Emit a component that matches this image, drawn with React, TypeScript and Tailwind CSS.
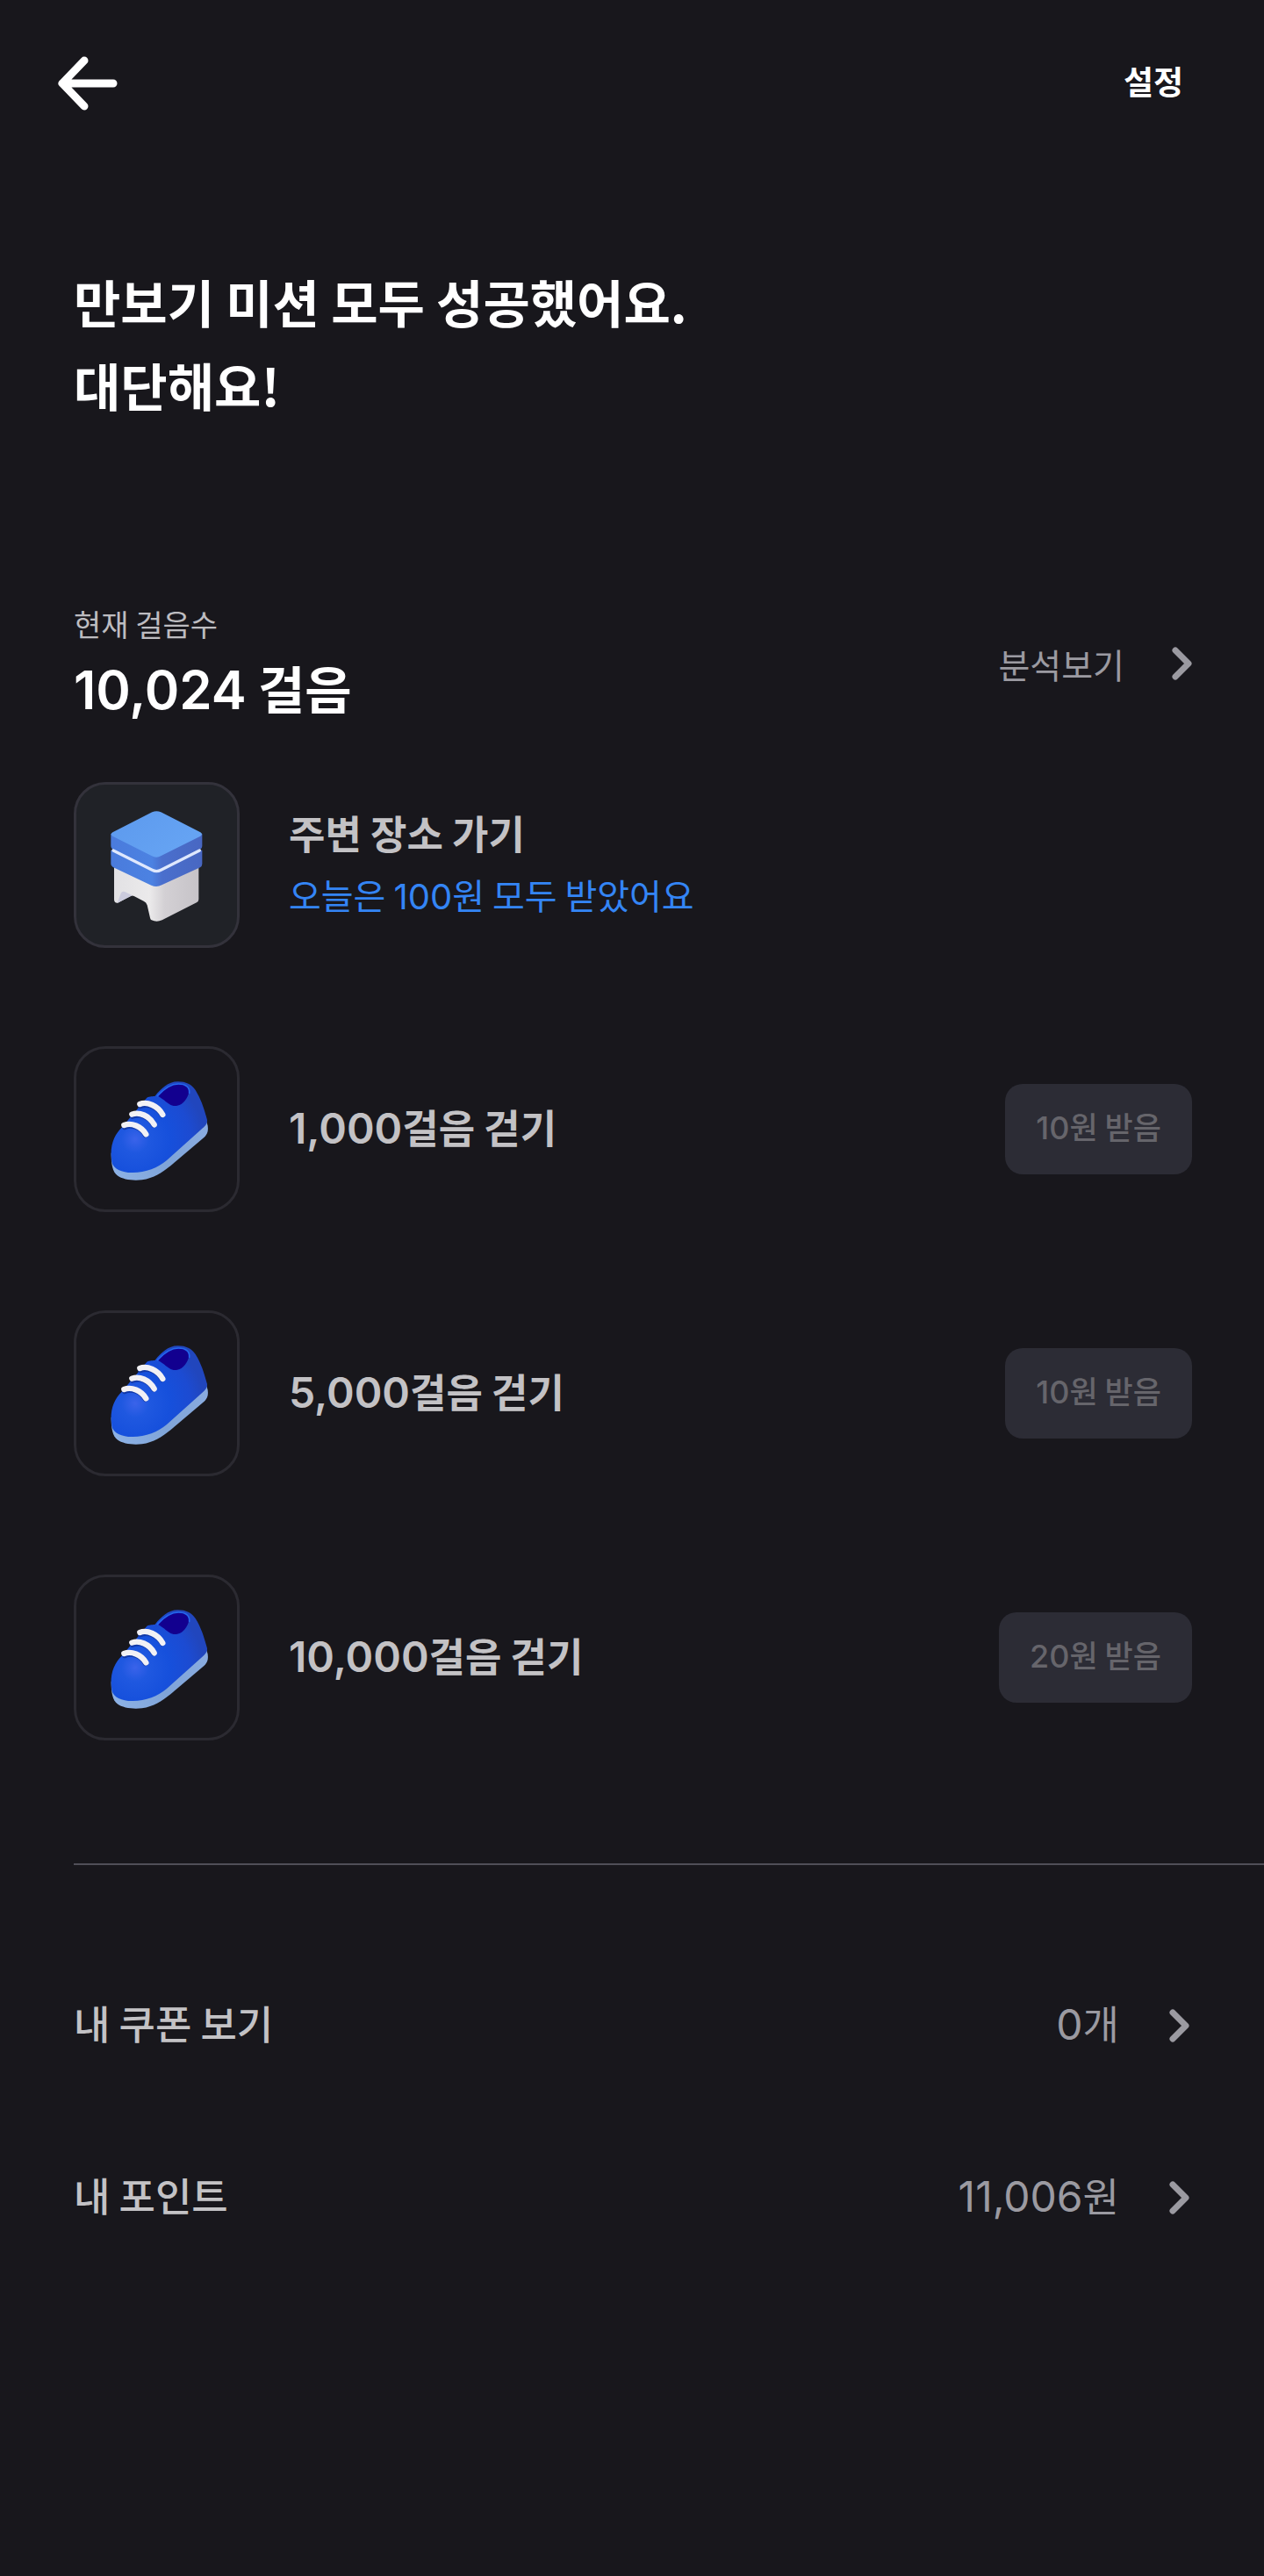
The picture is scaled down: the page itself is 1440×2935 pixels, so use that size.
import type { ReactNode } from "react";

// digits are set in Inter, slightly larger than the Hangul around them
function Num({ children }: { children: ReactNode }) {
  return <span className="font-['Inter',sans-serif] text-[48px] leading-none">{children}</span>;
}

function Chevron() {
  return (
    <svg
      width="26"
      height="40"
      viewBox="0 0 26 40"
      fill="none"
      stroke="#9b9aa1"
      strokeWidth="7"
      strokeLinecap="round"
      strokeLinejoin="round"
      aria-hidden="true"
    >
      <path d="M5 5 L20 20 L5 35" />
    </svg>
  );
}

function StoolIcon() {
  return (
    <svg width="130" height="130" viewBox="103 121 390 390" aria-hidden="true">
      <defs>
        <linearGradient id="stoolLeg" x1="150" y1="0" x2="440" y2="0" gradientUnits="userSpaceOnUse">
          <stop offset="0" stopColor="#e2e1e4" />
          <stop offset="0.42" stopColor="#ebeaeb" />
          <stop offset="0.6" stopColor="#d3d0d4" />
          <stop offset="1" stopColor="#c6c3c8" />
        </linearGradient>
        <linearGradient id="stoolSide" x1="140" y1="0" x2="452" y2="0" gradientUnits="userSpaceOnUse">
          <stop offset="0" stopColor="#4a7bdc" />
          <stop offset="0.45" stopColor="#4c82e2" />
          <stop offset="0.56" stopColor="#4a6fcd" />
          <stop offset="1" stopColor="#4867c2" />
        </linearGradient>
        <linearGradient id="stoolTop" x1="200" y1="140" x2="330" y2="290" gradientUnits="userSpaceOnUse">
          <stop offset="0" stopColor="#5e9bee" />
          <stop offset="1" stopColor="#65a3f3" />
        </linearGradient>
      </defs>
      <path
        d="M151 300 L440 300 V432 Q440 439 433 443 L315 503 Q296 511 279 503 Q275 501 274 495 L264 452 Q261 442 252 438 L219 421 Q213 418 207 421 L164 444 Q152 446 151 433 Z"
        fill="url(#stoolLeg)"
      />
      <path d="M162 444 L174 412 Q179 402 189 407 L213 419 Z" fill="#cbcbdd" />
      <path
        d="M140 264 L452 264 V311 Q452 319 445 323 L314 383 Q296 393 278 384 L147 322 Q140 318 140 311 Z"
        fill="url(#stoolSide)"
      />
      <path
        d="M140 208 L452 208 V250 Q452 258 445 262 L314 325 Q296 335 278 326 L147 262 Q140 258 140 250 Z"
        fill="url(#stoolSide)"
      />
      <path
        d="M148 265 L281 332 Q296 340 311 332 L443 265"
        fill="none"
        stroke="#dfe8fd"
        strokeWidth="10"
        strokeLinecap="round"
      />
      <path
        d="M146 203 L281 134 Q296 127 311 134 L446 203 Q456 209 446 216 L312 283 Q296 293 280 284 L146 216 Q136 209 146 203 Z"
        fill="url(#stoolTop)"
      />
    </svg>
  );
}

function ShoeIcon() {
  return (
    <svg width="130" height="130" viewBox="102 110 390 390" aria-hidden="true">
      <defs>
        <radialGradient id="shoeBody" cx="222" cy="338" r="235" gradientUnits="userSpaceOnUse">
          <stop offset="0" stopColor="#3a63ea" />
          <stop offset="0.2" stopColor="#1f58e0" />
          <stop offset="0.5" stopColor="#1650dc" />
          <stop offset="0.8" stopColor="#1c4bd2" />
          <stop offset="1" stopColor="#2146bd" />
        </radialGradient>
        <linearGradient id="shoeSole" x1="140" y1="470" x2="470" y2="290" gradientUnits="userSpaceOnUse">
          <stop offset="0" stopColor="#8eb3e6" />
          <stop offset="0.5" stopColor="#7fa4d8" />
          <stop offset="1" stopColor="#8aace0" />
        </linearGradient>
      </defs>
      <path
        d="M140 385 C140 425 145 448 160 461 C180 477 215 480 245 477 C285 472 314 452 343 429 L458 331 C470 319 472 308 470 292 L462 262 Z"
        fill="url(#shoeSole)"
      />
      <path
        d="M140 392 C138 350 155 318 176 298 L262 196 C272 190 284 192 290 190 C310 166 334 141 368 141 C396 141 415 151 428 170 C447 200 458 235 468 272 C469 286 460 294 448 304 L330 410 C300 436 258 452 214 452 C180 453 146 440 142 415 Z"
        fill="url(#shoeBody)"
      />
      <path d="M300 190 C320 166 342 150 370 150 C394 149 409 160 406 178 C401 196 388 219 366 223 C350 228 334 216 322 205 Z" fill="#12008f" />
      <path
        d="M298 190 C320 166 342 149 370 149 C394 149 409 160 407 180"
        fill="none"
        stroke="#2467ee"
        strokeWidth="5"
        strokeLinecap="round"
      />
      <g fill="none" stroke="#1239a8" strokeWidth="17" strokeLinecap="round">
        <path d="M240 225 C267 214 298 229 314 256" />
        <path d="M213 260 C240 249 270 262 285 290" />
        <path d="M186 297 C212 286 242 298 257 324" />
      </g>
      <g fill="none" stroke="#f2f1f5" strokeWidth="19" strokeLinecap="round">
        <path d="M238 218 C263 208 300 224 316 254" />
        <path d="M211 253 C236 243 271 258 287 288" />
        <path d="M184 290 C209 280 243 294 259 321" />
      </g>
    </svg>
  );
}

const missions = [
  { steps: "1,000", reward: "10" },
  { steps: "5,000", reward: "10" },
  { steps: "10,000", reward: "20" },
];

const wallet = [
  { label: "내 쿠폰 보기", amount: "0", unit: "개" },
  { label: "내 포인트", amount: "11,006", unit: "원" },
];

export default function App() {
  return (
    <div className="min-h-screen bg-[#18171c] pb-20 font-['Noto_Sans_CJK_KR',sans-serif] text-white">

      {/* HEADER */}
      <header className="flex h-[188px] items-center justify-between pl-[60px] pr-[92px]">
        <button type="button" aria-label="뒤로">
          <svg
            width="80"
            height="72"
            viewBox="0 0 80 72"
            fill="none"
            stroke="currentColor"
            strokeWidth="9"
            strokeLinecap="round"
            strokeLinejoin="round"
            aria-hidden="true"
          >
            <path d="M36 11 L11 37 L36 63 M11 37 H69" />
          </svg>
        </button>
        <button type="button" className="pb-1 text-[37px] leading-[48px] font-semibold">
          설정
        </button>
      </header>

      <main>
        <h1 className="px-[84px] pt-[108px] text-[58px] leading-[95px] font-semibold">
          만보기 미션 모두 성공했어요.
          <br />
          대단해요!
        </h1>

        {/* TODAY */}
        <section className="mt-[201px] flex items-center justify-between pl-[84px] pr-[80px]">
          <div>
            <p className="text-[34px] leading-[48px] text-[#bdbcc0]">현재 걸음수</p>
            <p className="mt-1.5 text-[58px] leading-[84px] font-semibold">
              <span className="font-['Inter',sans-serif] text-[60px] leading-none">10,024</span> 걸음
            </p>
          </div>
          <a href="#analysis" className="flex items-center gap-[53px] text-[39px] leading-[48px] text-[#9b9aa1]">
            분석보기
            <Chevron />
          </a>
        </section>

        {/* MISSIONS */}
        <ul className="mt-[66px] flex flex-col gap-28 pl-[84px] pr-[82px]">
          <li className="flex items-center gap-14">
            <div className="flex size-[189px] items-center justify-center rounded-[36px] border-3 border-[#33323b] bg-[#202227]">
              <StoolIcon />
            </div>
            <div className="pb-1">
              <h2 className="text-[45px] leading-[70px] font-semibold text-[#c3c2c5]">주변 장소 가기</h2>
              <p className="text-[40px] leading-[70px] text-[#3485f5]">
                오늘은 <span className="font-['Inter',sans-serif] leading-none">100</span>원 모두 받았어요
              </p>
            </div>
          </li>

          {missions.map(({ steps, reward }) => (
            <li key={steps} className="flex items-center gap-14">
              <div className="flex size-[189px] items-center justify-center rounded-[36px] border-3 border-[#2b2a31]">
                <ShoeIcon />
              </div>
              <h2 className="flex-1 pb-1.5 text-[45px] leading-[70px] font-semibold text-[#c3c2c5]">
                <Num>{steps}</Num>걸음 걷기
              </h2>
              <button
                type="button"
                disabled
                className="h-[103px] rounded-[20px] bg-[#2c2c35] px-[35px] pb-2 text-[35px] leading-[48px] font-medium text-[#66656b]"
              >
                <span className="font-['Inter',sans-serif] text-[36px] leading-none">{reward}</span>원 받음
              </button>
            </li>
          ))}
        </ul>

        <hr className="mt-[140px] ml-[84px] border-t-2 border-[#504f58]" />

        {/* WALLET */}
        <nav className="mt-[85px] pl-[84px] pr-[83px]">
          {wallet.map(({ label, amount, unit }) => (
            <a key={label} href="#wallet" className="flex h-[196px] items-center text-[45px] leading-[70px]">
              <span className="flex-1 pb-1.5 font-medium text-[#c3c2c5]">{label}</span>
              <span className="mr-[56px] pb-1.5 text-[#9b9aa1]">
                <Num>{amount}</Num>
                {unit}
              </span>
              <Chevron />
            </a>
          ))}
        </nav>
      </main>

    </div>
  );
}
